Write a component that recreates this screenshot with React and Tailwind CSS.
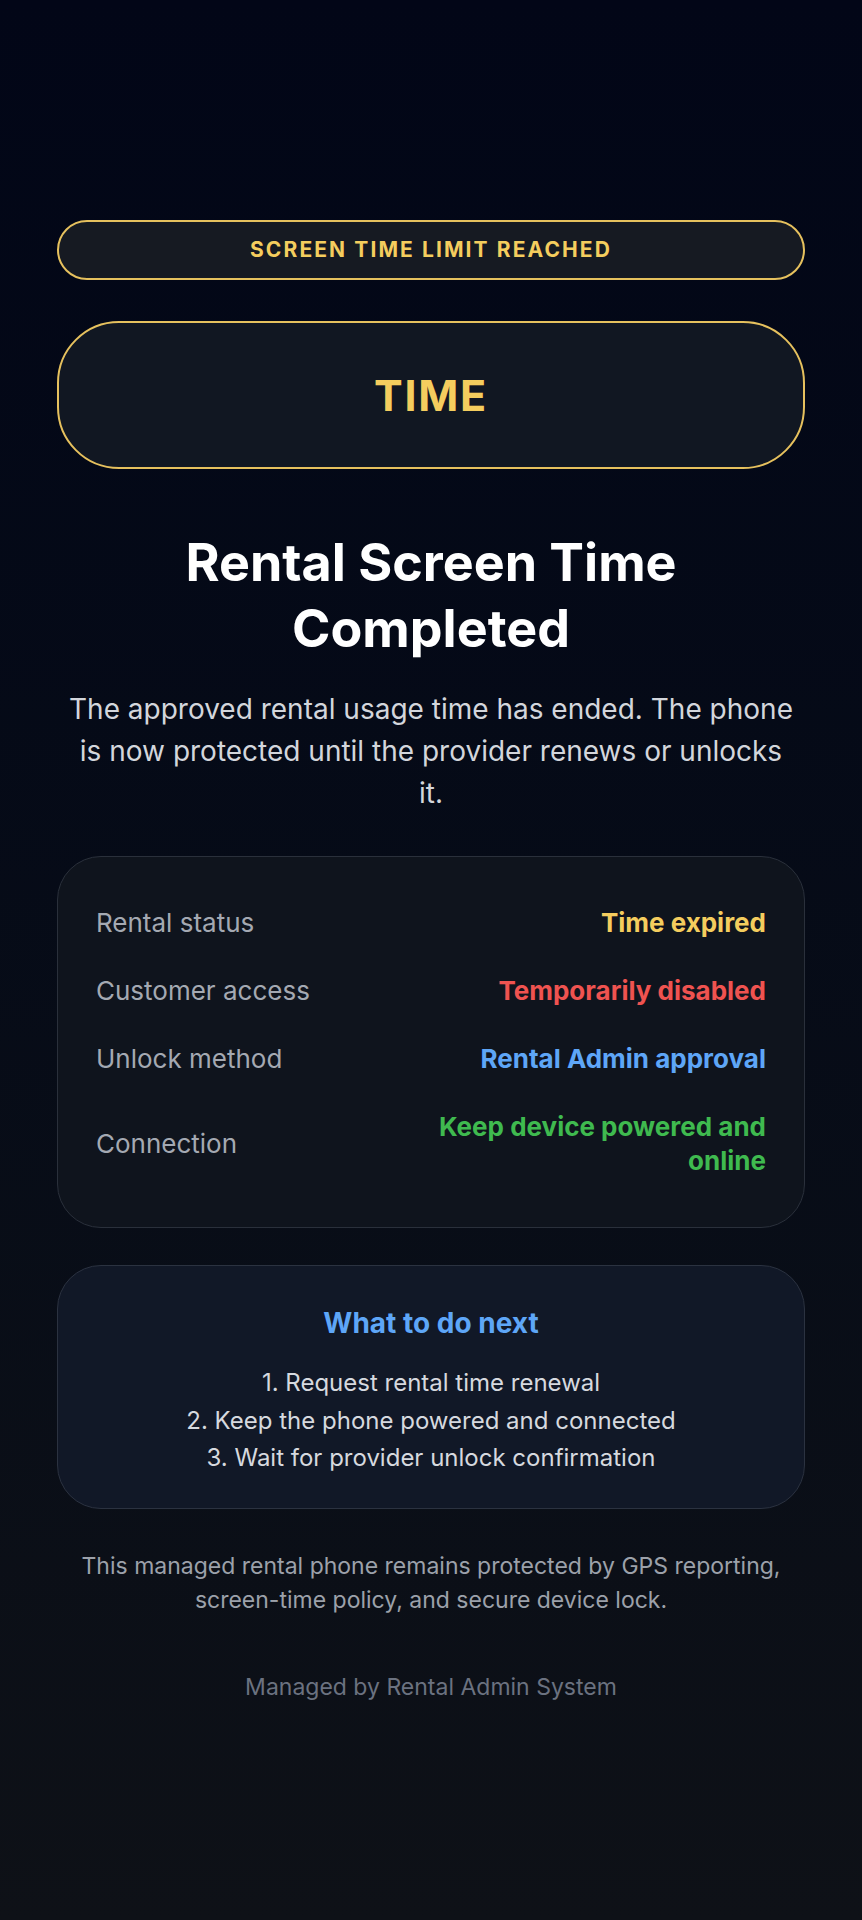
import React from 'react';

const rows = [
  { label: 'Rental status', value: 'Time expired', color: 'text-[#f4cd5e]' },
  { label: 'Customer access', value: 'Temporarily disabled', color: 'text-[#ef5350]' },
  { label: 'Unlock method', value: 'Rental Admin approval', color: 'text-[#5ea6f7]' },
  { label: 'Connection', value: 'Keep device powered and online', color: 'text-[#3fba4f]' },
];

const steps = [
  '1. Request rental time renewal',
  '2. Keep the phone powered and connected',
  '3. Wait for provider unlock confirmation',
];

export default function App() {
  return (
    <div
      className="min-h-[1920px] w-full bg-gradient-to-b from-[#020617] to-[#0e1117] px-[57px] pt-[220px] text-center"
      style={{ fontFamily: 'Inter, "Noto Sans", sans-serif' }}
    >
      {/* status pill */}
      <div className="flex h-[60px] items-center justify-center rounded-full border-2 border-[#e6c15e] bg-[#161a22]">
        <span className="text-[21px] font-bold tracking-[0.1em] text-[#f4cd5e]">SCREEN TIME LIMIT REACHED</span>
      </div>

      <div className="mt-[41px] flex h-[148px] items-center justify-center rounded-[62px] border-2 border-[#e6c15e] bg-[#111722]">
        <span className="text-[43px] font-bold tracking-[0.04em] text-[#f4cd5e]">TIME</span>
      </div>

      <h1 className="mt-[61px] text-[52px] font-bold leading-[66px] text-white">
        Rental Screen Time
        <br />
        Completed
      </h1>

      <p className="mx-auto mt-[26px] max-w-[731px] text-[28px] leading-[42px] text-[#d3d6dc]">
        The approved rental usage time has ended. The phone is now protected until the provider renews or unlocks it.
      </p>

      {/* details */}
      <div className="mt-[42px] rounded-[44px] border border-[#2a303b] bg-[#0f141d] px-[38px] py-[32px]">
        {rows.map((r) => (
          <div key={r.label} className="flex items-center justify-between gap-4 py-[17px] text-[26px] leading-[34px]">
            <span className="text-left text-[#a4a9b2]">{r.label}</span>
            <span className={`max-w-[380px] text-right font-bold ${r.color}`}>{r.value}</span>
          </div>
        ))}
      </div>

      {/* next steps */}
      <div className="mt-[37px] rounded-[44px] border border-[#2b3240] bg-[#111827] px-[38px] pt-[39px] pb-[31px]">
        <h2 className="text-[28px] font-bold leading-[36px] text-[#5ea6f7]">What to do next</h2>
        <div className="mt-[23px] text-[24px] leading-[37.5px] text-[#d6d9df]">
          {steps.map((s) => (
            <div key={s}>{s}</div>
          ))}
        </div>
      </div>

      <p className="mt-[40px] px-[10px] text-[23px] leading-[34px] text-[#9ca1aa]">
        This managed rental phone remains protected by GPS reporting, screen-time policy, and secure device lock.
      </p>

      <p className="mt-[55px] text-[23px] leading-[30px] text-[#6b7280]">Managed by Rental Admin System</p>
    </div>
  );
}
